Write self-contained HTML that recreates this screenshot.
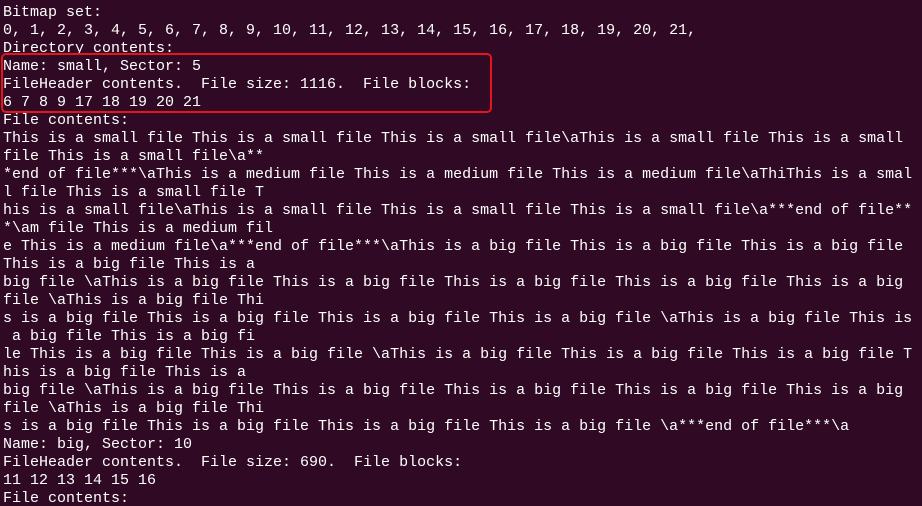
<!DOCTYPE html>
<html><head><meta charset="utf-8"><style>
html,body{margin:0;padding:0;background:#300a24;width:922px;height:506px;overflow:hidden;position:relative;}
pre{margin:0;position:absolute;left:3px;top:-14px;width:919px;overflow:hidden;font-family:"Liberation Mono","DejaVu Sans Mono",monospace;font-size:15px;line-height:18px;color:#ffffff;white-space:pre;}
.box{position:absolute;left:1px;top:53px;width:487px;height:56px;border:2px solid #e8141b;border-radius:5px;}
</style></head><body>
<pre>\ \ \ \ \ \ \ \ \ \ \ \ \ \ \ \ \ \ \ \ \ \ \ \ \ \ \ \ \ \ \ \ \ \ \ \ \ \ \ \ \ \
Bitmap set:
0, 1, 2, 3, 4, 5, 6, 7, 8, 9, 10, 11, 12, 13, 14, 15, 16, 17, 18, 19, 20, 21,
Directory contents:
Name: small, Sector: 5
FileHeader contents.  File size: 1116.  File blocks:
6 7 8 9 17 18 19 20 21
File contents:
This is a small file This is a small file This is a small file\aThis is a small file This is a small
file This is a small file\a**
*end of file***\aThis is a medium file This is a medium file This is a medium file\aThiThis is a smal
l file This is a small file T
his is a small file\aThis is a small file This is a small file This is a small file\a***end of file**
*\am file This is a medium fil
e This is a medium file\a***end of file***\aThis is a big file This is a big file This is a big file
This is a big file This is a
big file \aThis is a big file This is a big file This is a big file This is a big file This is a big
file \aThis is a big file Thi
s is a big file This is a big file This is a big file This is a big file \aThis is a big file This is
 a big file This is a big fi
le This is a big file This is a big file \aThis is a big file This is a big file This is a big file T
his is a big file This is a
big file \aThis is a big file This is a big file This is a big file This is a big file This is a big
file \aThis is a big file Thi
s is a big file This is a big file This is a big file This is a big file \a***end of file***\a
Name: big, Sector: 10
FileHeader contents.  File size: 690.  File blocks:
11 12 13 14 15 16
File contents:</pre>
<div class="box"></div>
</body></html>
